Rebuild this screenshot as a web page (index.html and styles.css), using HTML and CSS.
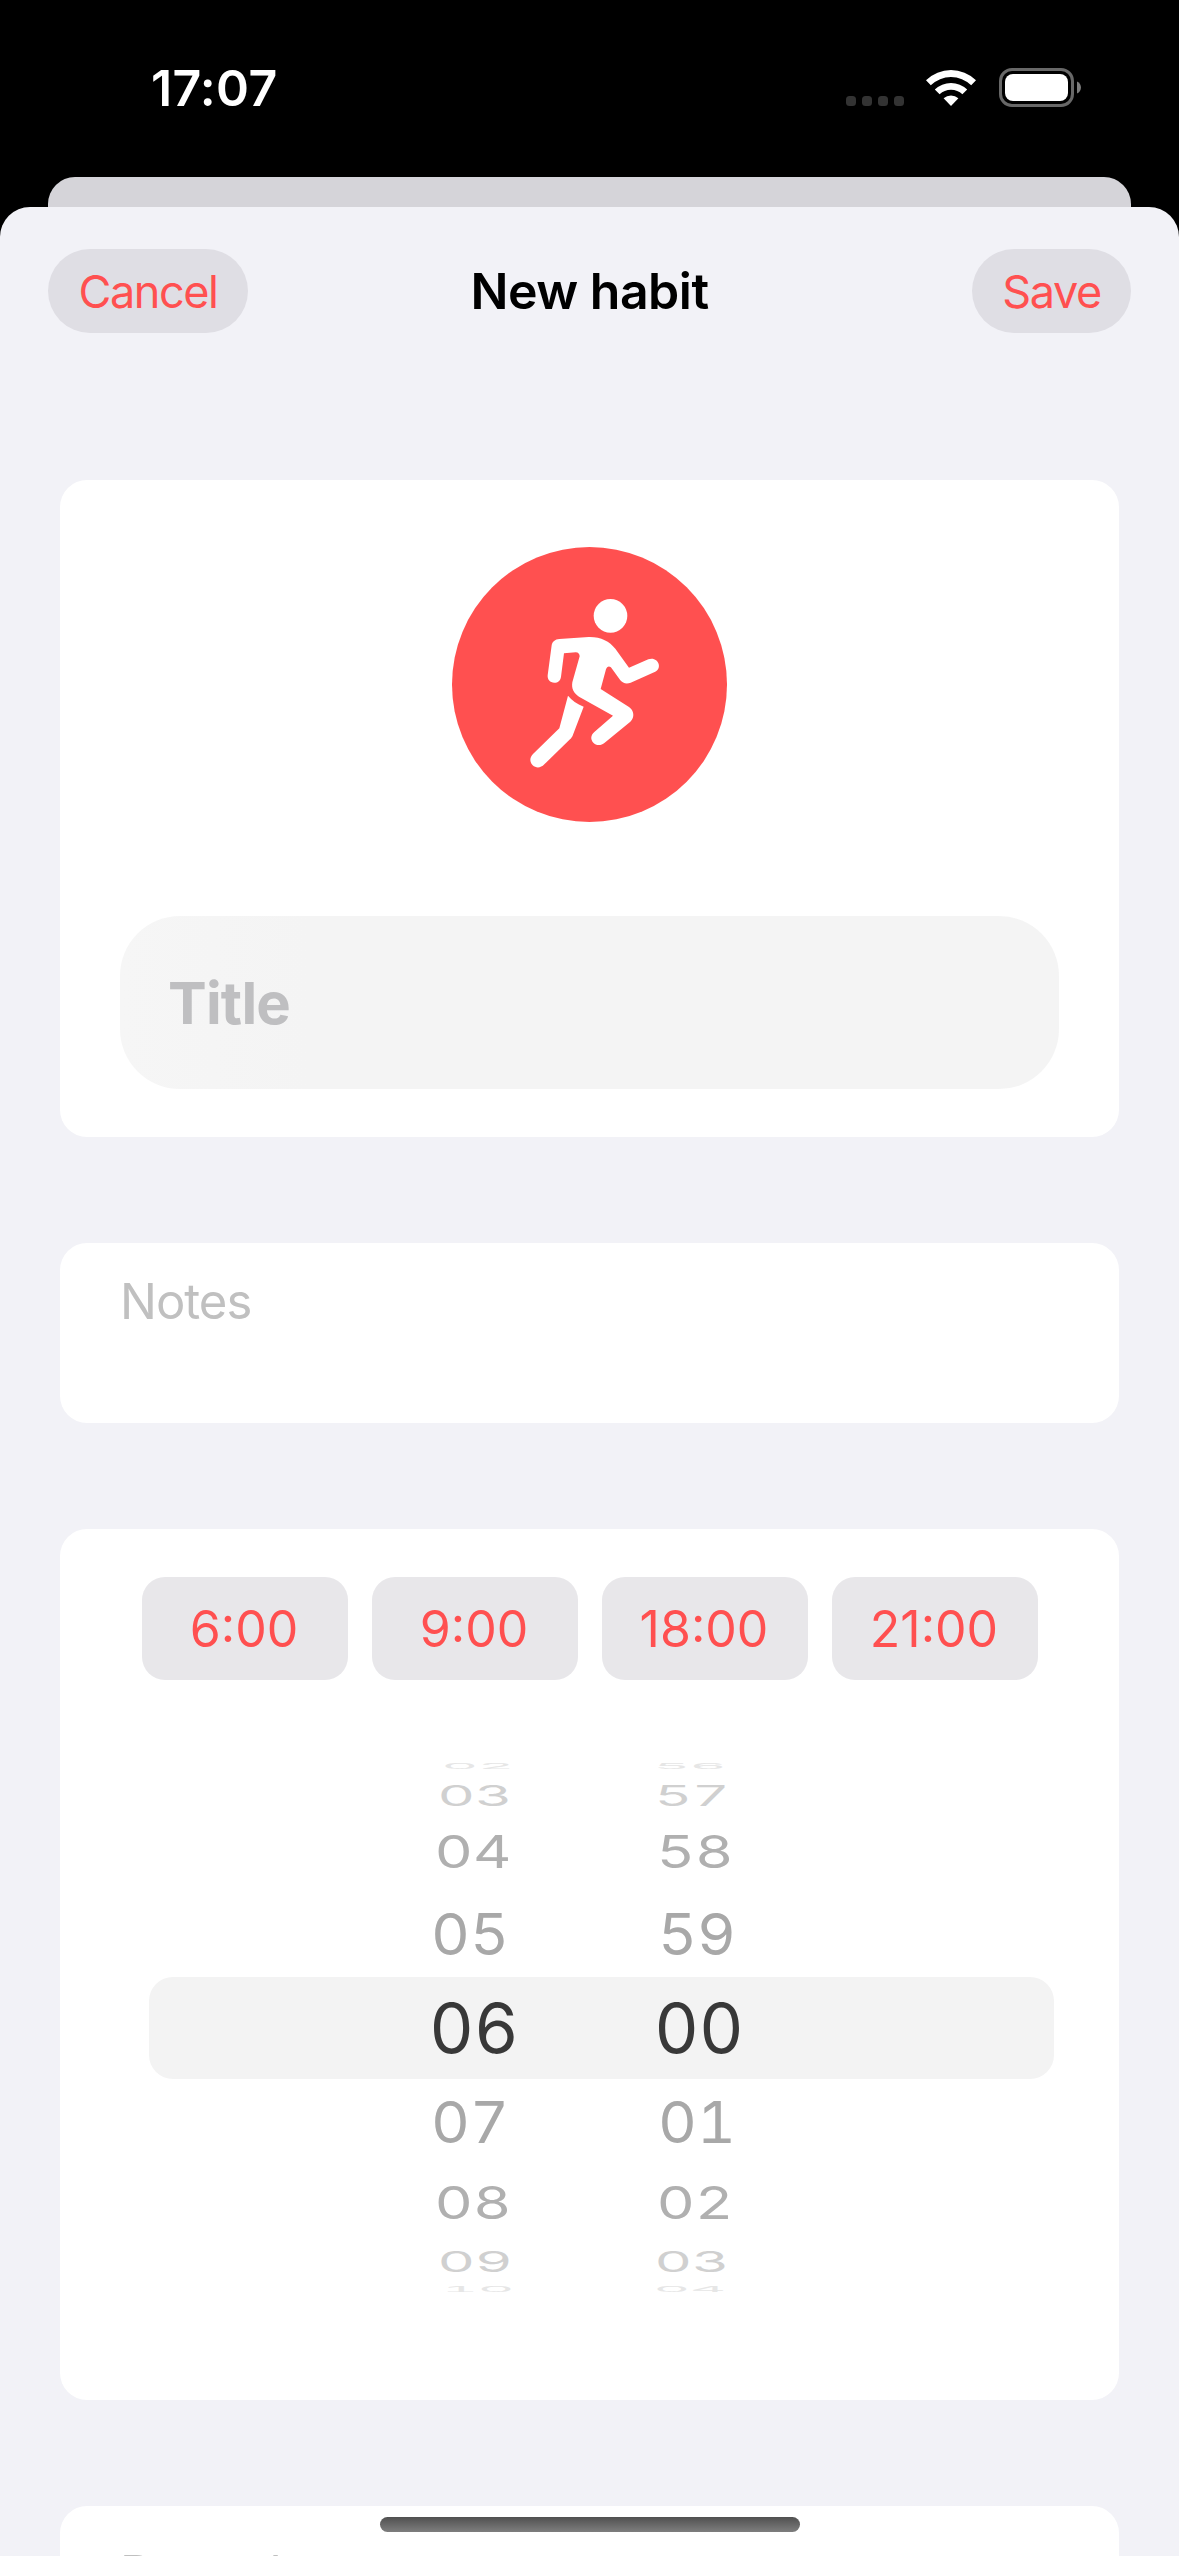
FILE: index.html
```html
<!DOCTYPE html>
<html lang="en">
<head>
<meta charset="utf-8">
<title>New habit</title>
<link rel="stylesheet" href="styles.css">
</head>
<body>
<div class="screen">
  <header class="status-bar">
    <span class="clock">17:07</span>
    <div class="indicators">
      <div class="signal"><i></i><i></i><i></i><i></i></div>
      <svg class="wifi" viewBox="0 0 50 37" aria-hidden="true">
        <path d="M0 11.2A36 36 0 0 1 50 11.2L45.200 16.200A29 29 0 0 0 4.800 16.200Z"/>
        <path d="M8.800 20.500A23.500 23.500 0 0 1 41.200 20.500L36.400 25.300A16.500 16.500 0 0 0 13.600 25.300Z"/>
        <path d="M17.600 29.300A11.500 11.500 0 0 1 32.400 29.300L25 37Z"/>
      </svg>
      <svg class="battery" viewBox="0 0 82 39" aria-hidden="true">
        <rect x="1.500" y="1.500" width="72" height="36" rx="11.500" fill="none" stroke="#686868" stroke-width="3"/>
        <rect x="6" y="6" width="63" height="27" rx="8" fill="#fff"/>
        <path d="M78 13.500C83.300 15.600 83.300 23.400 78 25.500Z" fill="#7d7d7d"/>
      </svg>
    </div>
  </header>
  <div class="back-sheet"></div>
  <main class="sheet">
    <nav class="nav">
      <button class="pill cancel">Cancel</button>
      <h1 class="title">New habit</h1>
      <button class="pill save">Save</button>
    </nav>
    <form class="form">
      <section class="card identity">
        <svg class="habit-icon" viewBox="66 81 825 825" aria-hidden="true">
          <circle cx="478.500" cy="493.500" r="412.500" fill="#ff5050"/>
          <g fill="#fff">
            <circle cx="541.500" cy="287.500" r="50.500"/>
            <path d="M388 357L476 351C512 350 538 364 556 386L597 443L655 418C669 412 683 420 686 432C689 444 683 452 674 456L602 488C590 493 578 490 571 481L546 446C540 436 531 438 528 448L512 507L597 561C612 571 615 592 601 605L524 668C513 678 498 677 490 668C481 658 482 646 493 636L549 587L447 530C431 520 424 506 427 487L449 409C449 402 445 397 437 397L402 400L393 470C391 482 384 488 373 488C360 488 352 479 353 466L365 376C367 365 375 358 388 357Z"/>
            <path d="M414 527C425 541 441 552 461 560L429 644C427 650 424 654 420 658L343 733C332 745 318 745 308 736C299 726 298 714 309 702L388 625Z"/>
          </g>
        </svg>
        <div class="field">Title</div>
      </section>
      <section class="card notes">Notes</section>
      <section class="card schedule">
        <div class="presets">
          <button class="preset">6:00</button>
          <button class="preset">9:00</button>
          <button class="preset">18:00</button>
          <button class="preset">21:00</button>
        </div>
        <div class="picker">
          <div class="row d4"><span>02</span><span>56</span></div>
          <div class="row d3"><span>03</span><span>57</span></div>
          <div class="row d2"><span>04</span><span>58</span></div>
          <div class="row d1"><span>05</span><span>59</span></div>
          <div class="row selected"><span>06</span><span>00</span></div>
          <div class="row d1"><span>07</span><span>01</span></div>
          <div class="row d2"><span>08</span><span>02</span></div>
          <div class="row d3"><span>09</span><span>03</span></div>
          <div class="row d4"><span>10</span><span>04</span></div>
        </div>
      </section>
      <section class="card record">Record</section>
    </form>
  </main>
  <div class="home-indicator"></div>
</div>
</body>
</html>
```
FILE: styles.css
```css
* { box-sizing: border-box; }

body {
  margin: 0;
  background: #000;
  font-family: Inter, "Liberation Sans", sans-serif;
}

.screen {
  position: relative;
  display: flex;
  flex-direction: column;
  width: 1179px;
  height: 2556px;
  overflow: hidden;
  background: #000;
}

.status-bar {
  display: flex;
  justify-content: space-between;
  align-items: flex-start;
  height: 177px;
  padding: 68px 98px 0 151px;
  color: #fff;
}

.clock {
  font-size: 50px;
  font-weight: 600;
  line-height: 40px;
  letter-spacing: 0.3px;
}

.indicators { display: flex; align-items: flex-start; }
.signal { display: flex; gap: 6px; padding-top: 28px; margin-right: 22px; }
.signal i { width: 10px; height: 10px; border-radius: 3.5px; background: #333; }
.wifi { width: 50px; height: 37px; margin: 1px 23px 0 0; fill: #fff; }
.battery { width: 82px; height: 39px; }

.back-sheet {
  flex: none;
  height: 30px;
  margin: 0 48px;
  border-radius: 27px 27px 0 0;
  background: #d5d4d9;
}

.sheet {
  flex: none;
  height: 2349px;
  border-radius: 30px 30px 0 0;
  background: #f2f2f7;
}

.nav {
  display: grid;
  grid-template-columns: 1fr auto 1fr;
  align-items: center;
  padding: 42px 48px 0;
}

/* Centred between pills of unequal width */
.title {
  margin: 0;
  font-size: 50px;
  font-weight: 600;
  letter-spacing: -0.5px;
}

.pill {
  height: 84px;
  padding: 0;
  border: 0;
  border-radius: 42px;
  background: #dfdee4;
  color: #ff5050;
  font: 400 45px/86px Inter, "Liberation Sans", sans-serif;
  letter-spacing: -1.4px;
}

.cancel { width: 200px; }
.save { width: 159px; justify-self: end; }

.form {
  display: flex;
  flex-direction: column;
  gap: 106px;
  padding: 147px 60px 0;
}

.card {
  flex: none;
  border-radius: 27px;
  background: #fff;
}

.identity {
  display: flex;
  flex-direction: column;
  align-items: center;
  height: 657px;
  padding: 67px 60px 0;
}

.habit-icon { width: 275px; height: 275px; }

.field {
  align-self: stretch;
  height: 173px;
  margin-top: 94px;
  padding-left: 48px;
  border-radius: 60px;
  background: linear-gradient(90deg, #f6f6f6, #f4f4f4 20%);
  color: #bfbfc1;
  font-size: 58px;
  font-weight: 700;
  line-height: 174px;
  letter-spacing: -0.8px;
}

.notes {
  height: 180px;
  padding: 29px 60px;
  color: #c0c0c0;
  font-size: 49px;
  line-height: 60px;
  letter-spacing: -1px;
}

.schedule { height: 871px; padding-top: 48px; }

.presets { display: flex; gap: 24px; padding-left: 82px; }

.preset {
  width: 206px;
  height: 103px;
  padding: 0 2px 0 0;
  border: 0;
  border-radius: 23px;
  background: #e8e7ea;
  color: #ff5050;
  font: 400 50px/105px Inter, "Liberation Sans", sans-serif;
}

.picker { padding: 77px 65px 0 89px; }

.row {
  display: flex;
  justify-content: center;
  align-items: center;
  gap: 125px;
  padding-right: 30px;
  font-size: 69px;
  font-variant-numeric: tabular-nums;
  line-height: 1;
}

.row span {
  width: 100px;
  text-align: center;
}

.selected {
  height: 102px;
  border-radius: 24px;
  background: #f3f3f3;
  color: #383838;
}

.d1 { height: 86px; color: #a8a8a8; }
.d2 { height: 77px; color: #b0b0b0; }
.d3 { height: 38px; color: #d0d0d0; }
.d4 { height: 19px; color: #e6e6e6; }

/* Rows flatten and lean outwards as they turn away on the wheel */
.d1 span { transform: translateX(-4px) scale(0.87, 0.83); }
.d2 span { transform: translateX(-1px) scale(0.86, 0.65); }
.d3 span { transform: translateX(1px) scale(0.84, 0.41); }
.d4 span { transform: translateX(4px) scale(0.81, 0.11); }
.d1 span + span { transform: translateX(-2px) scale(0.87, 0.83); }
.d2 span + span { transform: translateX(-4px) scale(0.86, 0.65); }
.d3 span + span { transform: translateX(-7px) scale(0.84, 0.41); }
.d4 span + span { transform: translateX(-9px) scale(0.81, 0.11); }

.record {
  height: 180px;
  padding: 38px 60px;
  color: #c0c0c0;
  font-size: 49px;
  line-height: 60px;
  letter-spacing: -0.6px;
}

.home-indicator {
  position: absolute;
  left: 380px;
  bottom: 24px;
  width: 420px;
  height: 15px;
  border-radius: 8px;
  background: linear-gradient(#505050, #7e7e7e);
}
```
